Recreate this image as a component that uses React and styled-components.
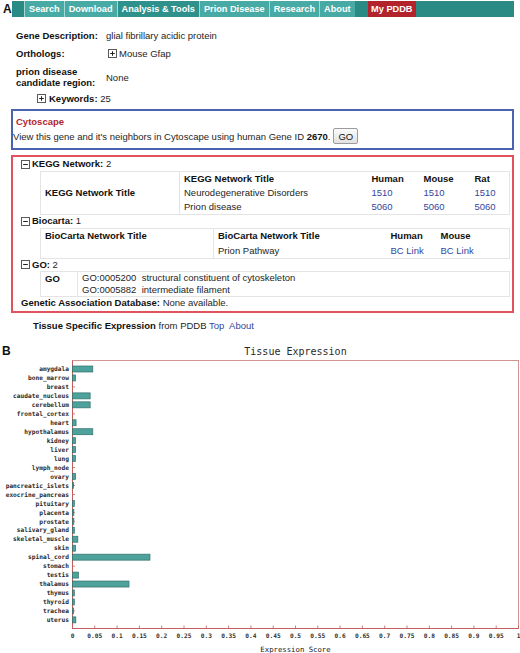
import React from 'react';
import styled, { createGlobalStyle } from 'styled-components';

const GlobalStyle = createGlobalStyle`
  html, body { margin: 0; padding: 0; background: #fff; }
  body {
    font-family: "Liberation Sans", Arial, sans-serif;
    font-size: 9.5px;
    color: #1e1e1e;
  }
`;

const Page = styled.div`
  width: 520px;
`;

const Panel = styled.section`
  display: grid;
  grid-template-columns: 11px 503px;
`;

const PanelLetter = styled.div`
  font: bold 12px "Liberation Sans", Arial, sans-serif;
  line-height: 12px;
  color: #111;
  padding: ${p => p.$pad || '3px 0 0 3px'};
`;

const Content = styled.div`
  display: flex;
  flex-direction: column;
`;

/* ---------- navigation bar ---------- */
const NavBar = styled.nav`
  display: flex;
  height: 16px;
  margin: 1px 0 0 1px;
  width: 490px;
  padding-left: 12px;
  background: #2a8a84;
`;

const navTones = {
  light: '#47aaa5',
  active: '#2f918b',
  accent: '#b3232c',
};

const NavItem = styled.a`
  display: block;
  font: bold 9.2px "Liberation Sans", Arial, sans-serif;
  line-height: 16px;
  color: #fff;
  white-space: nowrap;
  background: ${p => navTones[p.$tone]};
  border-left: ${p => (p.$tone === 'accent' ? 'none' : '1px solid #a6d8d5')};
  margin-left: ${p => (p.$tone === 'accent' ? '13px' : '0')};
  padding: ${p => (p.$tone === 'accent' ? '0 3.5px' : '0 4px')};
`;

/* ---------- gene summary ---------- */
const InfoGrid = styled.div`
  display: grid;
  grid-template-columns: 90px auto;
  row-gap: 7px;
  margin: 13px 0 0 5px;
  line-height: 11px;
`;

const InfoLabel = styled.div`
  font-weight: bold;
  color: #111;
`;

const InfoValue = styled.div`
  display: flex;
  align-items: center;
  gap: 2px;
  align-self: ${p => (p.$center ? 'center' : 'start')};
  padding-left: ${p => (p.$indent ? '2px' : '0')};
`;

const KeywordRow = styled.div`
  display: flex;
  align-items: center;
  gap: 3px;
  margin: 5px 0 0 26px;
  line-height: 11px;
`;

const Strong = styled.b`
  font-weight: bold;
  color: #111;
`;

/* ---------- expander glyph ---------- */
const ToggleSvg = styled.svg`
  display: block;
  flex: none;
`;

function Toggle({ open }) {
  return (
    <ToggleSvg width="9" height="9" viewBox="0 0 9 9">
      <rect x="0.5" y="0.5" width="8" height="8" fill="#fff" stroke="#5a5a5a" />
      <line x1="2.2" y1="4.5" x2="6.8" y2="4.5" stroke="#222" strokeWidth="1" />
      {!open && <line x1="4.5" y1="2.2" x2="4.5" y2="6.8" stroke="#222" strokeWidth="1" />}
    </ToggleSvg>
  );
}

/* ---------- cytoscape box ---------- */
const CytoBox = styled.div`
  margin-top: 5px;
  border: 2px solid #4a63b0;
  padding: 4px 0 4px 0;
`;

const CytoHeading = styled.div`
  color: #b3262c;
  font-weight: bold;
  line-height: 13px;
  padding-left: 3px;
`;

const CytoRow = styled.div`
  display: flex;
  align-items: center;
  gap: 3px;
  height: 16px;
`;

const GoButton = styled.button`
  height: 16px;
  padding: 0 4px;
  font: 9.5px "Liberation Sans", Arial, sans-serif;
  color: #111;
  border: 1px solid #9c9c9c;
  border-radius: 2px;
  background: linear-gradient(#fbfbfb, #e2e2e2);
`;

/* ---------- network annotations ---------- */
const NetBox = styled.div`
  margin-top: 5px;
  border: 2px solid #e2525c;
  padding: 1px 3px 2px 8px;
`;

const SectionHead = styled.div`
  display: flex;
  align-items: center;
  gap: 2px;
  line-height: ${p => p.$lh || '12px'};
`;

const DataTable = styled.table`
  margin: 1px 0 0 19px;
  width: 469px;
  border-collapse: collapse;
  table-layout: fixed;
  border: 1px solid #e4e4e4;

  th, td {
    padding: 0 0 0 4px;
    height: ${p => p.$rowH || '14px'};
    line-height: 12px;
    text-align: left;
    vertical-align: middle;
    white-space: nowrap;
  }
  th { font-weight: bold; color: #111; }
`;

const LeadCell = styled.th`
  border-right: 1px solid #e4e4e4;
  vertical-align: ${p => (p.$top ? 'top' : 'middle')} !important;
  padding-top: ${p => (p.$top ? '1px' : '0')} !important;
`;

const GoLines = styled.td`
  line-height: 12px !important;
  padding-top: 0 !important;
`;

const GoEntry = styled.div`
  white-space: pre;
`;

const Link = styled.a`
  color: #34459c;
  text-decoration: none;
`;

const TissueLine = styled.div`
  margin: 7px 0 0 22px;
  line-height: 12px;
`;

/* ---------- chart ---------- */
const ChartSection = styled.section`
  display: flex;
  flex-direction: column;
`;

const ChartHead = styled.div`
  display: grid;
  grid-template-columns: 72px 447px;
  align-items: center;
  margin-top: 13px;
  height: 12px;
`;

const ChartTitle = styled.div`
  text-align: center;
  font: 10px "DejaVu Sans Mono", "Liberation Mono", monospace;
  color: #2a2a2a;
`;

const ChartSvg = styled.svg`
  display: block;
`;

const TissueLabel = styled.text`
  font: bold 6.2px "DejaVu Sans Mono", "Liberation Mono", monospace;
  fill: #2a2a2a;
`;

const TickLabel = styled.text`
  font: bold 6.2px "DejaVu Sans Mono", "Liberation Mono", monospace;
  fill: #333;
`;

const AxisTitle = styled.text`
  font: 7.3px "DejaVu Sans Mono", "Liberation Mono", monospace;
  fill: #222;
`;

const tissues = [
  ['amygdala', 0.0455],
  ['bone_marrow', 0.0067],
  ['breast', 0],
  ['caudate_nucleus', 0.0396],
  ['cerebellum', 0.0396],
  ['frontal_cortex', 0],
  ['heart', 0.008],
  ['hypothalamus', 0.0455],
  ['kidney', 0.0067],
  ['liver', 0.0067],
  ['lung', 0.0067],
  ['lymph_node', 0],
  ['ovary', 0.0067],
  ['pancreatic_islets', 0.002],
  ['exocrine_pancreas', 0],
  ['pituitary', 0.004],
  ['placenta', 0.003],
  ['prostate', 0.003],
  ['salivary_gland', 0.004],
  ['skeletal_muscle', 0.012],
  ['skin', 0.0067],
  ['spinal_cord', 0.1737],
  ['stomach', 0],
  ['testis', 0.0134],
  ['thalamus', 0.1267],
  ['thymus', 0.004],
  ['thyroid', 0.004],
  ['trachea', 0.002],
  ['uterus', 0.0075],
];

const X0 = 72.5;
const X1 = 518.5;
const TOP = 3.5;
const AXIS = 271.5;
const SCALE = X1 - X0;
const ROW0 = 12;
const ROW_STEP = 8.96;

function ExpressionChart() {
  const ticks = Array.from({ length: 21 }, (_, i) => i * 0.05);
  return (
    <ChartSvg width="520" height="298" viewBox="0 0 520 298">
      <rect x={X0} y={TOP} width={X1 - X0} height={AXIS - TOP} fill="none" stroke="#d49393" strokeWidth="1" />
      <line x1={X0} y1={TOP} x2={X0} y2={AXIS} stroke="#c25e5e" strokeWidth="1" />
      <line x1={X0} y1={AXIS} x2={X1} y2={AXIS} stroke="#c25e5e" strokeWidth="1" />
      {tissues.map(([name, v], i) => {
        const y = ROW0 + i * ROW_STEP;
        return (
          <g key={name}>
            <TissueLabel x="69" y={y + 2.2} textAnchor="end">{name}</TissueLabel>
            <line x1={X0} y1={y} x2={X0 + 2.5} y2={y} stroke="#c25e5e" strokeWidth="0.8" />
            {v > 0 && (
              <rect
                x={X0}
                y={y - 3}
                width={Math.max(v * SCALE, 1)}
                height="6"
                fill="#4fa19c"
                stroke="#2f716d"
                strokeWidth="0.7"
              />
            )}
          </g>
        );
      })}
      {ticks.map((t, i) => {
        const x = X0 + t * SCALE;
        const label = i === 0 ? '0' : i === 20 ? '1' : String(parseFloat(t.toFixed(2)));
        return (
          <g key={i}>
            <line x1={x} y1={AXIS - 3} x2={x} y2={AXIS} stroke="#c25e5e" strokeWidth="0.8" />
            <TickLabel x={x} y="281" textAnchor="middle">{label}</TickLabel>
          </g>
        );
      })}
      <AxisTitle x={(X0 + X1) / 2} y="294.5" textAnchor="middle">Expression Score</AxisTitle>
    </ChartSvg>
  );
}

export default function App() {
  return (
    <Page>
      <GlobalStyle />
      <Panel>
        <PanelLetter>A</PanelLetter>
        <Content>
          <NavBar>
            <NavItem $tone="light">Search</NavItem>
            <NavItem $tone="light">Download</NavItem>
            <NavItem $tone="active">Analysis &amp; Tools</NavItem>
            <NavItem $tone="light">Prion Disease</NavItem>
            <NavItem $tone="light">Research</NavItem>
            <NavItem $tone="light">About</NavItem>
            <NavItem $tone="accent">My PDDB</NavItem>
          </NavBar>

          <InfoGrid>
            <InfoLabel>Gene Description:</InfoLabel>
            <InfoValue>glial fibrillary acidic protein</InfoValue>
            <InfoLabel>Orthologs:</InfoLabel>
            <InfoValue $indent>
              <Toggle />
              <span>Mouse Gfap</span>
            </InfoValue>
            <InfoLabel>
              prion disease
              <br />
              candidate region:
            </InfoLabel>
            <InfoValue $center>None</InfoValue>
          </InfoGrid>

          <KeywordRow>
            <Toggle />
            <span>
              <Strong>Keywords:</Strong> 25
            </span>
          </KeywordRow>

          <CytoBox>
            <CytoHeading>Cytoscape</CytoHeading>
            <CytoRow>
              <span>
                View this gene and it's neighbors in Cytoscape using human Gene ID <Strong>2670</Strong>.
              </span>
              <GoButton type="button">GO</GoButton>
            </CytoRow>
          </CytoBox>

          <NetBox>
            <SectionHead>
              <Toggle open />
              <span>
                <Strong>KEGG Network:</Strong> 2
              </span>
            </SectionHead>
            <DataTable>
              <colgroup>
                <col style={{ width: 139 }} />
                <col style={{ width: 188 }} />
                <col style={{ width: 52 }} />
                <col style={{ width: 51 }} />
                <col style={{ width: 39 }} />
              </colgroup>
              <tbody>
                <tr>
                  <LeadCell rowSpan={3}>KEGG Network Title</LeadCell>
                  <th>KEGG Network Title</th>
                  <th>Human</th>
                  <th>Mouse</th>
                  <th>Rat</th>
                </tr>
                <tr>
                  <td>Neurodegenerative Disorders</td>
                  <td><Link>1510</Link></td>
                  <td><Link>1510</Link></td>
                  <td><Link>1510</Link></td>
                </tr>
                <tr>
                  <td>Prion disease</td>
                  <td><Link>5060</Link></td>
                  <td><Link>5060</Link></td>
                  <td><Link>5060</Link></td>
                </tr>
              </tbody>
            </DataTable>

            <SectionHead>
              <Toggle open />
              <span>
                <Strong>Biocarta:</Strong> 1
              </span>
            </SectionHead>
            <DataTable $rowH="14.5px">
              <colgroup>
                <col style={{ width: 173 }} />
                <col style={{ width: 173 }} />
                <col style={{ width: 50 }} />
                <col style={{ width: 73 }} />
              </colgroup>
              <tbody>
                <tr>
                  <LeadCell rowSpan={2} $top>BioCarta Network Title</LeadCell>
                  <th>BioCarta Network Title</th>
                  <th>Human</th>
                  <th>Mouse</th>
                </tr>
                <tr>
                  <td>Prion Pathway</td>
                  <td><Link>BC Link</Link></td>
                  <td><Link>BC Link</Link></td>
                </tr>
              </tbody>
            </DataTable>

            <SectionHead $lh="11px">
              <Toggle open />
              <span>
                <Strong>GO:</Strong> 2
              </span>
            </SectionHead>
            <DataTable>
              <colgroup>
                <col style={{ width: 37 }} />
                <col style={{ width: 432 }} />
              </colgroup>
              <tbody>
                <tr>
                  <LeadCell $top>GO</LeadCell>
                  <GoLines>
                    <GoEntry>GO:0005200  structural constituent of cytoskeleton</GoEntry>
                    <GoEntry>GO:0005882  intermediate filament</GoEntry>
                  </GoLines>
                </tr>
              </tbody>
            </DataTable>

            <SectionHead>
              <span>
                <Strong>Genetic Association Database:</Strong> None available.
              </span>
            </SectionHead>
          </NetBox>

          <TissueLine>
            <Strong>Tissue Specific Expression</Strong> from PDDB <Link>Top</Link>&nbsp; <Link>About</Link>
          </TissueLine>
        </Content>
      </Panel>

      <ChartSection>
        <ChartHead>
          <PanelLetter $pad="0 0 0 2px">B</PanelLetter>
          <ChartTitle>Tissue Expression</ChartTitle>
        </ChartHead>
        <ExpressionChart />
      </ChartSection>
    </Page>
  );
}
